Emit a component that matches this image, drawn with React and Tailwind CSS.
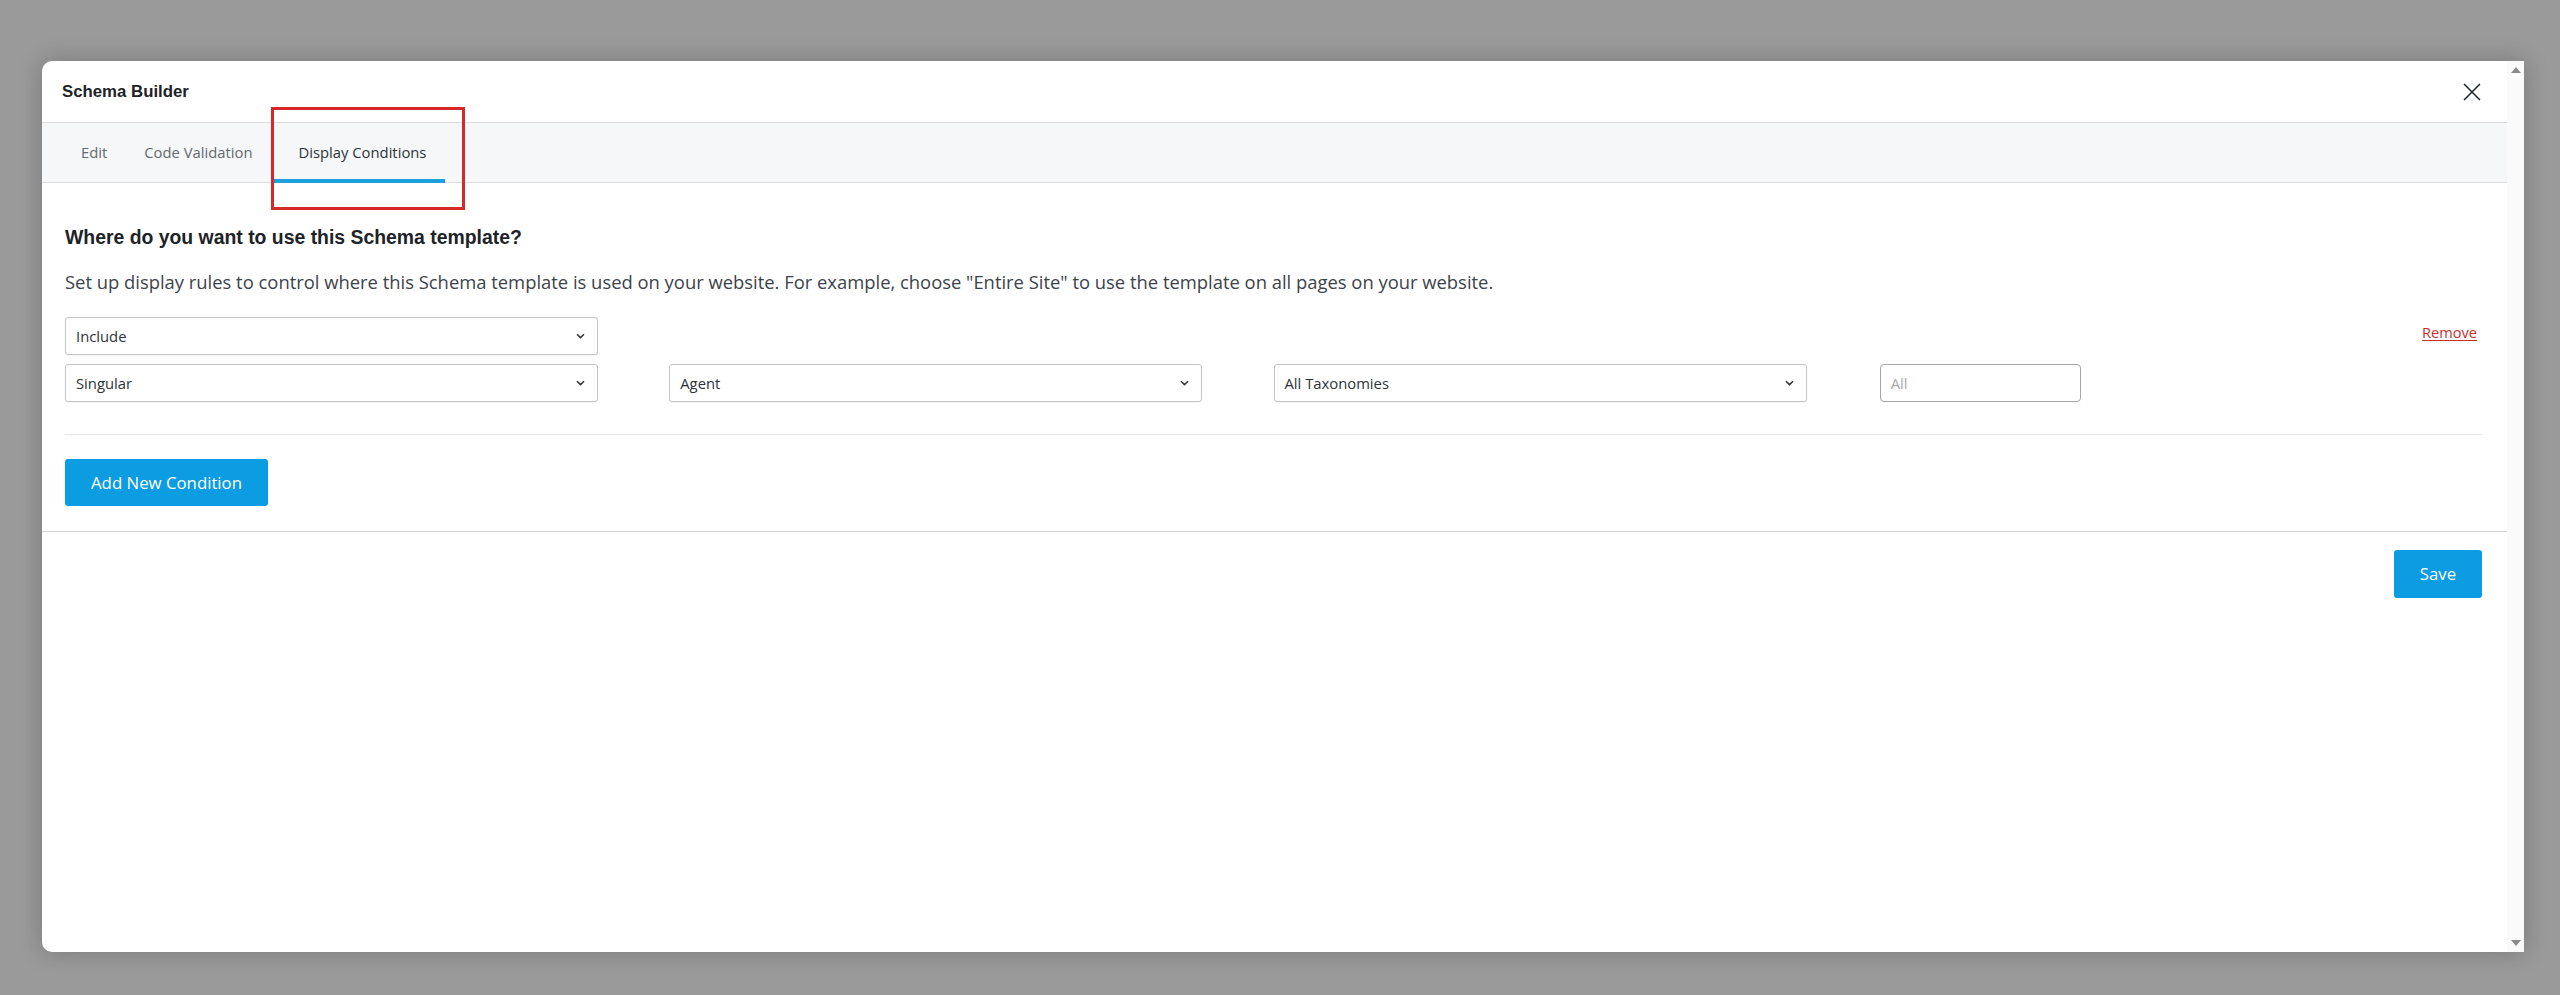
function Chevron() {
  return (
    <svg width="9" height="6" viewBox="0 0 9 6" className="shrink-0">
      <path d="M1 1.2 L4.5 4.6 L8 1.2" fill="none" stroke="#333" strokeWidth="1.5" />
    </svg>
  )
}

function Select({ value }) {
  return (
    <div className="w-[533px] h-[38px] border border-[#c3c4c7] rounded-[3px] bg-white flex items-center justify-between pl-[10px] pr-[12px] shadow-[0_1px_1px_rgba(0,0,0,0.04)]">
      <span className="text-[14.8px] text-[#2c3338]">{value}</span>
      <Chevron />
    </div>
  )
}

export default function App() {
  const font = { fontFamily: '"Open Sans", "Noto Sans", sans-serif' }

  return (
    <div className="w-[2560px] h-[995px] bg-[#9a9a9a] overflow-hidden pt-[61px] pl-[42px]" style={font}>
      <div className="relative w-[2482px] h-[891px] bg-white rounded-l-[10px] shadow-[0_0_24px_rgba(0,0,0,0.22)] flex">
        {/* main column */}
        <div className="flex-1 flex flex-col">
          {/* header */}
          <div className="h-[62px] border-b border-[#dcdcde] flex items-center justify-between pl-[20px] pr-[26px]">
            <h1 className="text-[16.8px] font-bold text-[#1d2327]" style={{ fontFamily: '"Liberation Sans", Arial, sans-serif' }}>
              Schema Builder
            </h1>
            <svg width="18" height="18" viewBox="0 0 18 18" className="mt-[1px]">
              <path d="M1 1 L17 17 M17 1 L1 17" stroke="#1d2327" strokeWidth="1.5" fill="none" />
            </svg>
          </div>

          {/* tabs */}
          <div className="h-[60px] bg-[#f6f7f8] border-b border-[#dcdcde] flex pl-[20px]">
            <div className="px-[19px] flex items-center text-[14.8px] text-[#646970]">Edit</div>
            <div className="px-[18px] flex items-center text-[14.8px] text-[#646970]">Code Validation</div>
            <div className="relative pl-[27px] pr-[19px] ml-[1px] flex items-center text-[14.8px] text-[#2c3338]">
              Display Conditions
              <div className="absolute left-0 right-0 -bottom-[1px] h-[4px] bg-[#1ba0db]" />
            </div>
          </div>

          {/* body */}
          <div className="pl-[23px] pr-[25px]">
            <h2 className="pt-[43px] text-[19.4px] leading-[22px] font-bold text-[#1d2327]" style={{ fontFamily: '"Liberation Sans", Arial, sans-serif' }}>
              Where do you want to use this Schema template?
            </h2>
            <p className="mt-[21px] text-[18.4px] leading-[25px] text-[#3c434a]">
              Set up display rules to control where this Schema template is used on your website. For example, choose "Entire Site" to use the template on all pages on your website.
            </p>

            <div className="mt-[23px] flex items-center justify-between">
              <Select value="Include" />
              <a className="mr-[5px] mb-[7px] text-[14.6px] text-[#c9302c] underline underline-offset-2 cursor-pointer">Remove</a>
            </div>

            <div className="mt-[9px] grid grid-cols-4 items-center">
              <Select value="Singular" />
              <Select value="Agent" />
              <Select value="All Taxonomies" />
              <div className="ml-[2px] w-[201px] h-[38px] border border-[#a2a6aa] rounded-[4px] bg-white flex items-center pl-[10px] text-[14.8px] text-[#a7aaad]">
                All
              </div>
            </div>

            <div className="mt-[32px] border-t border-[#e6e6e6]" />

            <button className="mt-[24px] mb-[25px] w-[203px] h-[47px] rounded-[3px] bg-[#0b9ce2] text-white text-[16.8px] flex items-center justify-center" style={font}>
              Add New Condition
            </button>
          </div>

          {/* footer */}
          <div className="border-t border-[#d5d5d5] flex justify-end pr-[25px] pt-[18px]">
            <button className="w-[88px] h-[48px] rounded-[3px] bg-[#0b9ce2] text-white text-[16.8px] flex items-center justify-center" style={font}>
              Save
            </button>
          </div>
        </div>

        {/* scrollbar */}
        <div className="w-[17px] bg-[#fafafa] flex flex-col items-center justify-between py-[6px]">
          <svg width="10" height="6" viewBox="0 0 10 6"><path d="M0 6 L5 0 L10 6 Z" fill="#8a8a8a" /></svg>
          <svg width="10" height="6" viewBox="0 0 10 6"><path d="M0 0 L5 6 L10 0 Z" fill="#8a8a8a" /></svg>
        </div>

        {/* annotation highlight */}
        <div className="absolute left-[229px] top-[46px] w-[194px] h-[103px] border-[3px] border-[#d62828] pointer-events-none" />
      </div>
    </div>
  )
}
